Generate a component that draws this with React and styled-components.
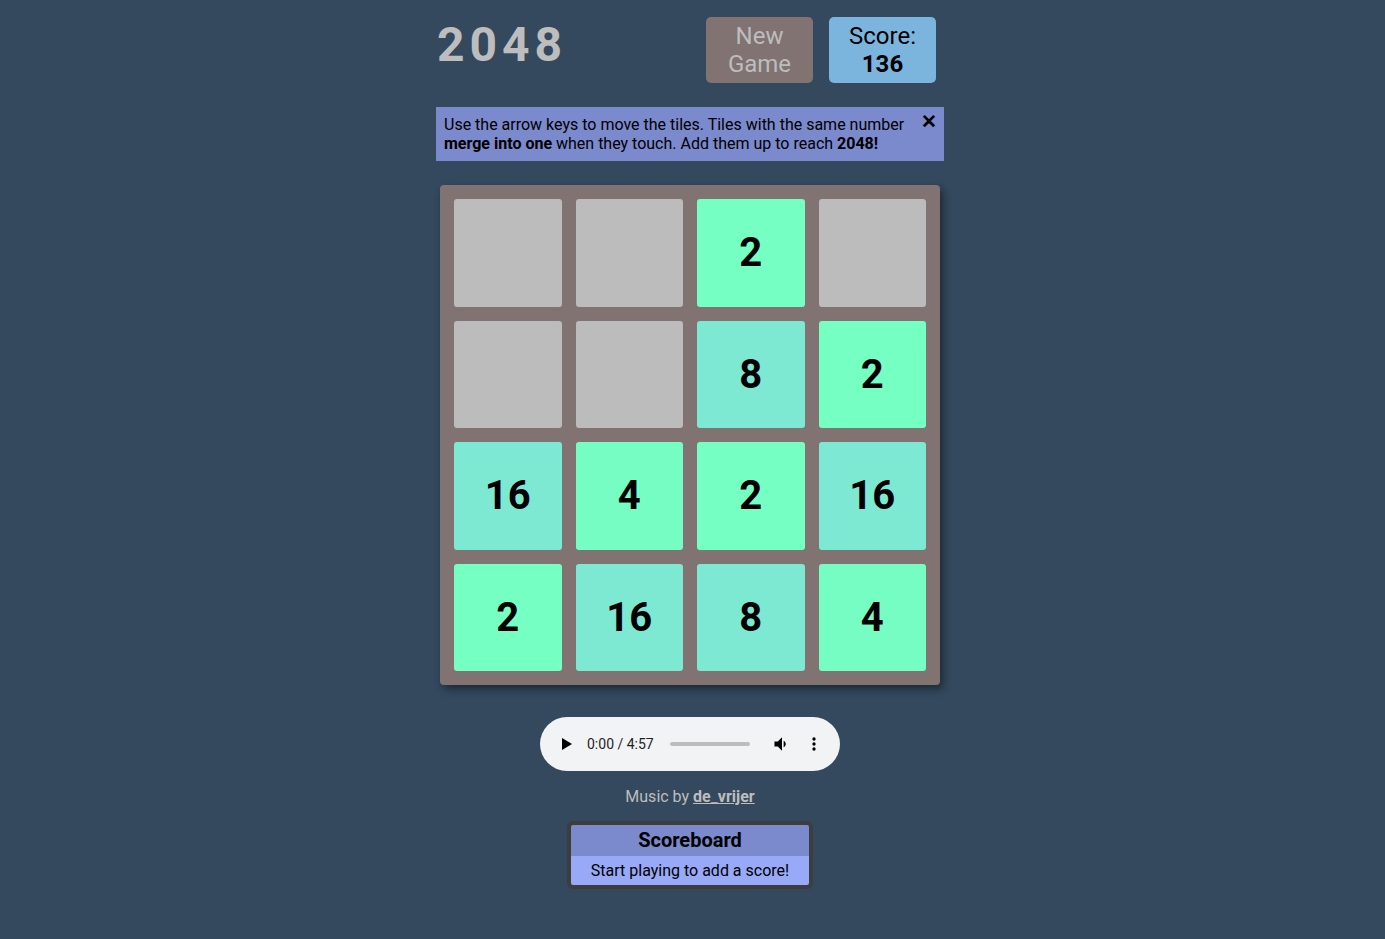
import React from "react";
import styled, { createGlobalStyle } from "styled-components";

const Global = createGlobalStyle`
  html, body { margin: 0; padding: 0; }
  body {
    background: #34495e;
    font-family: Roboto, "Liberation Sans", sans-serif;
    padding-right: 5px;
    min-height: 939px;
  }
`;

const Column = styled.div`
  width: 508px;
  margin: 0 auto;
  display: flex;
  flex-direction: column;
  align-items: center;
`;

const Header = styled.div`
  width: 500px;
  align-self: flex-start;
  display: flex;
  align-items: flex-start;
  margin-top: 17px;
  height: 66px;
`;

const Title = styled.h1`
  margin: 0;
  flex: 1;
  font-size: 48px;
  font-weight: 700;
  letter-spacing: 5px;
  color: #bdbdbd;
  line-height: 56px;
  padding-left: 1px;
`;

const Box = styled.div`
  width: 107px;
  height: 66px;
  box-sizing: border-box;
  border-radius: 5px;
  background: ${(p) => p.$bg};
  color: ${(p) => p.$fg};
  font-size: 24px;
  line-height: 28px;
  display: flex;
  flex-direction: column;
  align-items: center;
  justify-content: center;
  text-align: center;
  margin-left: ${(p) => p.$ml || 0}px;
  border: none;
  font-family: inherit;
  padding: 0;
`;

const Bold = styled.span`
  font-weight: 700;
`;

const Info = styled.div`
  width: 508px;
  box-sizing: border-box;
  margin-top: 24px;
  background: #7b89cd;
  padding: 8px 30px 8px 8px;
  font-size: 16px;
  line-height: 19px;
  color: #000;
  position: relative;
`;

const Close = styled.span`
  position: absolute;
  right: 7px;
  top: 4px;
  font-size: 19px;
  font-weight: 700;
  line-height: 22px;
`;

const Board = styled.div`
  margin-top: 24px;
  width: 500px;
  height: 500px;
  box-sizing: border-box;
  padding: 14px;
  background: #807371;
  border-radius: 4px;
  box-shadow: 3px 4px 8px rgba(0, 0, 0, 0.45);
  display: grid;
  grid-template-columns: repeat(4, 1fr);
  grid-template-rows: repeat(4, 1fr);
  gap: 14px;
`;

const tileColors = {
  0: "#bcbcbc",
  2: "#76ffc2",
  4: "#76fdc4",
  8: "#7ee9d3",
  16: "#7ee9d3",
};

const Tile = styled.div`
  background: ${(p) => tileColors[p.$v]};
  border-radius: 3px;
  display: flex;
  align-items: center;
  justify-content: center;
  font-size: 40px;
  font-weight: 700;
  color: #000;
`;

const Player = styled.div`
  margin-top: 32px;
  width: 300px;
  height: 54px;
  border-radius: 27px;
  background: #f1f3f4;
  display: flex;
  align-items: center;
  box-sizing: border-box;
  padding-left: 21px;
  font-family: Roboto, sans-serif;
`;

const Time = styled.span`
  font-size: 14px;
  color: #1f1f1f;
  margin-left: 14px;
  width: 83px;
`;

const Track = styled.div`
  width: 80px;
  height: 4px;
  border-radius: 2px;
  background: #bdbdbd;
`;

const IconSlot = styled.div`
  display: flex;
  align-items: center;
  margin-left: ${(p) => p.$ml}px;
`;

const Credit = styled.p`
  margin: 16px 0 0;
  font-size: 16px;
  line-height: 19px;
  color: #bdbdbd;
`;

const CreditLink = styled.a`
  color: #bdbdbd;
  font-weight: 700;
  text-decoration: underline;
`;

const Scoreboard = styled.div`
  margin-top: 15px;
  width: 246px;
  box-sizing: border-box;
  border: 4px solid #3d3d3d;
  border-radius: 6px;
  overflow: hidden;
  text-align: center;
`;

const SbHead = styled.div`
  background: #7b89cd;
  font-size: 20px;
  font-weight: 700;
  line-height: 31px;
  height: 31px;
  color: #000;
`;

const SbBody = styled.div`
  background: #97a9f7;
  font-size: 16px;
  line-height: 29px;
  height: 29px;
  color: #000;
`;

const grid = [
  [0, 0, 2, 0],
  [0, 0, 8, 2],
  [16, 4, 2, 16],
  [2, 16, 8, 4],
];

export default function App() {
  return (
    <>
      <Global />
      <Column>
        <Header>
          <Title>2048</Title>
          <Box as="button" $bg="#807371" $fg="#bdbdbd">
            <span>New</span>
            <span>Game</span>
          </Box>
          <Box $bg="#7bb5de" $fg="#000" $ml={16}>
            <span>Score:</span>
            <Bold>136</Bold>
          </Box>
        </Header>
        <Info>
          Use the arrow keys to move the tiles. Tiles with the same number{" "}
          <Bold>merge into one</Bold> when they touch. Add them up to reach{" "}
          <Bold>2048!</Bold>
          <Close>✕</Close>
        </Info>
        <Board>
          {grid.flat().map((v, i) => (
            <Tile key={i} $v={v}>
              {v || ""}
            </Tile>
          ))}
        </Board>
        <Player>
          <svg width="12" height="14" viewBox="0 0 12 14">
            <path d="M1 1 L11 7 L1 13 Z" fill="#000" />
          </svg>
          <Time>0:00 / 4:57</Time>
          <Track />
          <IconSlot $ml={22}>
            <svg width="20" height="20" viewBox="0 0 24 24">
              <path
                d="M3 9v6h4l5 5V4L7 9H3zm13.5 3c0-1.77-1.02-3.29-2.5-4.03v8.05c1.48-.73 2.5-2.25 2.5-4.02z"
                fill="#000"
              />
            </svg>
          </IconSlot>
          <IconSlot $ml={12}>
            <svg width="20" height="20" viewBox="0 0 24 24">
              <circle cx="12" cy="6" r="2" fill="#000" />
              <circle cx="12" cy="12" r="2" fill="#000" />
              <circle cx="12" cy="18" r="2" fill="#000" />
            </svg>
          </IconSlot>
        </Player>
        <Credit>
          Music by <CreditLink href="#">de_vrijer</CreditLink>
        </Credit>
        <Scoreboard>
          <SbHead>Scoreboard</SbHead>
          <SbBody>Start playing to add a score!</SbBody>
        </Scoreboard>
      </Column>
    </>
  );
}
